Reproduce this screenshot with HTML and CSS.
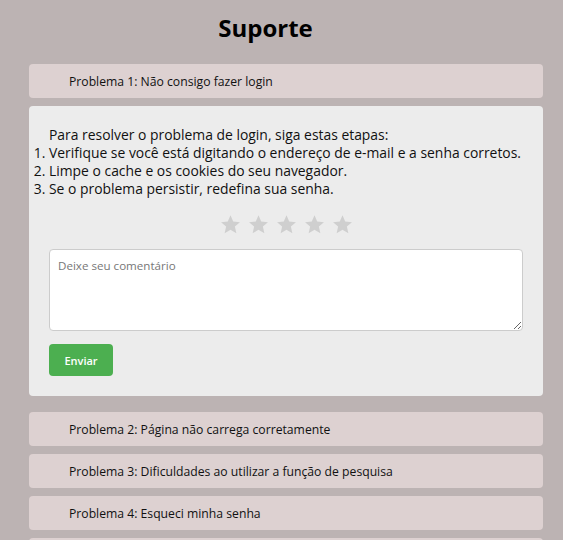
FILE: index.html
```html
<!DOCTYPE html>
<html lang="pt-BR">
<head>
<meta charset="utf-8">
<title>Suporte</title>
<link rel="stylesheet" href="styles.css">
</head>
<body>
<main class="support">
  <h1 class="title">Suporte</h1>
  <div class="faq">
    <div class="faq-item open">
      <div class="faq-header">Problema 1: Não consigo fazer login</div>
      <div class="faq-panel">
        <p class="intro">Para resolver o problema de login, siga estas etapas:</p>
        <ol class="steps">
          <li>Verifique se você está digitando o endereço de e-mail e a senha corretos.</li>
          <li>Limpe o cache e os cookies do seu navegador.</li>
          <li>Se o problema persistir, redefina sua senha.</li>
        </ol>
        <div class="stars">
          <svg class="star" viewBox="0 0 24 24"><polygon points="12,1.5 15.1,8.6 22.8,9.3 17,14.4 18.7,22 12,18 5.3,22 7,14.4 1.2,9.3 8.9,8.6"/></svg>
          <svg class="star" viewBox="0 0 24 24"><polygon points="12,1.5 15.1,8.6 22.8,9.3 17,14.4 18.7,22 12,18 5.3,22 7,14.4 1.2,9.3 8.9,8.6"/></svg>
          <svg class="star" viewBox="0 0 24 24"><polygon points="12,1.5 15.1,8.6 22.8,9.3 17,14.4 18.7,22 12,18 5.3,22 7,14.4 1.2,9.3 8.9,8.6"/></svg>
          <svg class="star" viewBox="0 0 24 24"><polygon points="12,1.5 15.1,8.6 22.8,9.3 17,14.4 18.7,22 12,18 5.3,22 7,14.4 1.2,9.3 8.9,8.6"/></svg>
          <svg class="star" viewBox="0 0 24 24"><polygon points="12,1.5 15.1,8.6 22.8,9.3 17,14.4 18.7,22 12,18 5.3,22 7,14.4 1.2,9.3 8.9,8.6"/></svg>
        </div>
        <textarea class="comment" placeholder="Deixe seu comentário"></textarea>
        <button class="send">Enviar</button>
      </div>
    </div>
    <div class="faq-item">
      <div class="faq-header">Problema 2: Página não carrega corretamente</div>
    </div>
    <div class="faq-item">
      <div class="faq-header">Problema 3: Dificuldades ao utilizar a função de pesquisa</div>
    </div>
    <div class="faq-item">
      <div class="faq-header">Problema 4: Esqueci minha senha</div>
    </div>
    <div class="faq-item">
      <div class="faq-header">Problema 5: Não recebo e-mails de confirmação</div>
    </div>
  </div>
</main>
</body>
</html>
```

FILE: styles.css
```css
* { box-sizing: border-box; }
html, body { margin: 0; padding: 0; }
body {
  background: #bcb3b3;
  font-family: "Open Sans", "DejaVu Sans", sans-serif;
  color: #111;
}
.support {
  width: 514px;
  margin: 0 0 0 29px;
  padding-top: 11px;
}
.title {
  margin: 0 0 19px;
  padding-right: 41px;
  text-align: center;
  font-size: 24px;
  line-height: 34px;
  font-weight: 700;
  color: #000;
}
.faq { display: flex; flex-direction: column; gap: 8px; }
.faq-item { display: flex; flex-direction: column; gap: 8px; }
.faq-item.open { margin-bottom: 8px; }
.faq-header {
  background: #ddd1d1;
  border-radius: 4px;
  height: 34px;
  padding-left: 40px;
  display: flex;
  align-items: center;
  font-size: 12.2px;
  color: #111;
}
.faq-panel {
  background: #ececec;
  border-radius: 4px;
  padding: 20px;
  display: flex;
  flex-direction: column;
  align-items: flex-start;
  font-size: 13.9px;
  line-height: 18px;
}
.intro { margin: 0; }
.steps { margin: 0; padding-left: 0; }
.stars {
  align-self: stretch;
  display: flex;
  justify-content: center;
  align-items: center;
  gap: 7px;
  margin-top: 14px;
  height: 24px;
}
.star { width: 21px; height: 21px; fill: #cfcfcf; }
.comment {
  align-self: stretch;
  margin-top: 13px;
  height: 82px;
  border: 1px solid #cccccc;
  border-radius: 4px;
  padding: 8px;
  font-family: inherit;
  font-size: 11.6px;
  background: #fff;
  resize: vertical;
}
.comment::placeholder { color: #777; }
.send {
  margin-top: 13px;
  width: 64px;
  height: 32px;
  border: 0;
  border-radius: 4px;
  background: #4caf50;
  color: #fff;
  font-family: inherit;
  font-size: 11px;
  font-weight: 600;
}
```
